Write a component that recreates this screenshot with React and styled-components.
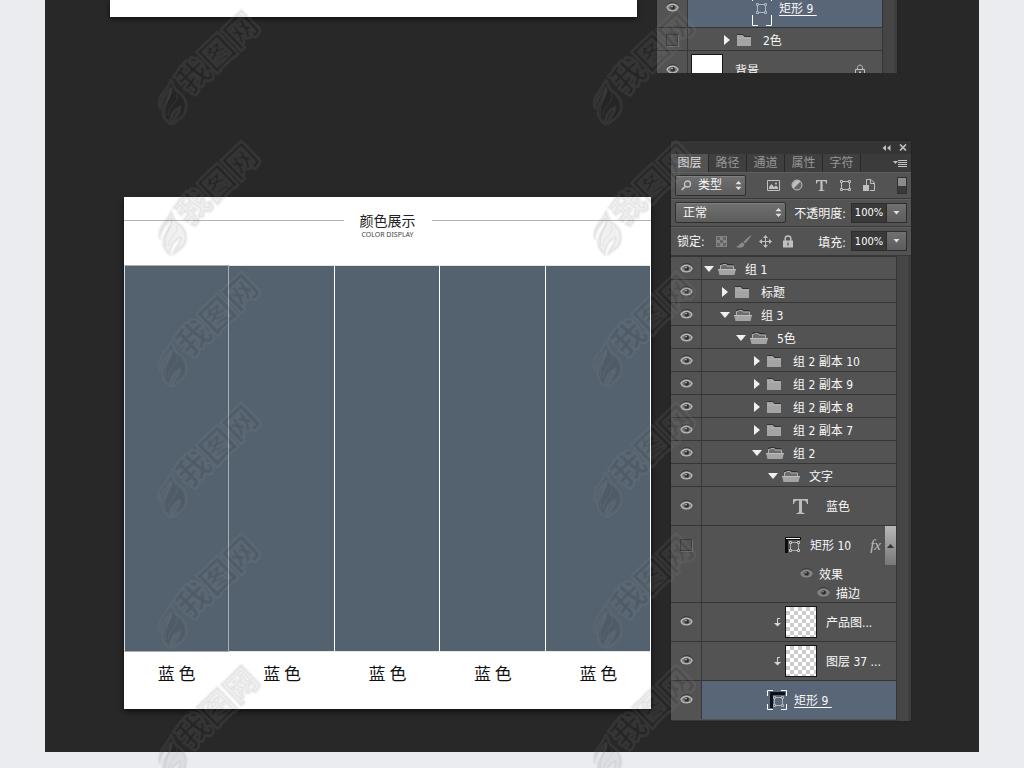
import { useState } from "react";
import styled, { createGlobalStyle, css } from "styled-components";

const GlobalStyle = createGlobalStyle`
  * {
    box-sizing: border-box;
  }

  body {
    margin: 0;
    background: #ebecf0;
    font-family: "DejaVu Sans Condensed", "Noto Sans CJK SC", sans-serif;
    font-size: 12px;
  }

  button, input, select {
    font: inherit;
    color: inherit;
    margin: 0;
    padding: 0;
    border: none;
    background: none;
  }

  svg {
    display: block;
    flex: none;
  }
`;

// Page

const Page = styled.main`
  position: relative;
  overflow: hidden;
  padding: 0 45px 16px;
`;

const Board = styled.div`
  background: #282828;
  padding-bottom: 31px;
`;

const TopSection = styled.section`
  display: grid;
  grid-template-columns: minmax(0, 1fr) 240px;
  gap: 20px;
  align-items: start;
  padding: 0 82px 0 65px;
  height: 73px;
  overflow: hidden;
`;

const ColorSection = styled.section`
  display: grid;
  grid-template-columns: minmax(0, 1fr) 240px;
  gap: 20px;
  align-items: start;
  margin-top: 68px;
  padding: 0 68px 0 79px;
`;

const Sheet = styled.div`
  background: #fff;
  height: 17px;
  box-shadow: 0 2px 5px rgba(0, 0, 0, 0.6);
`;

// Color card

const ColorCard = styled.article`
  margin-top: 56px;
  background: #fff;
  box-shadow: 0 3px 6px rgba(0, 0, 0, 0.6);
`;

const CardHeader = styled.header`
  display: flex;
  height: 68px;
  padding-top: 14px;
`;

const Rule = styled.span`
  flex: 1;
  height: 1px;
  margin-top: 9px;
  background: #b2b2b2;
`;

const CardTitle = styled.div`
  width: 88px;
  text-align: center;
  font-family: "Noto Sans CJK SC", sans-serif;
  color: #222;
`;

const Title = styled.h2`
  margin: 0;
  font-size: 14px;
  font-weight: 400;
  line-height: 18px;
`;

const Subtitle = styled.p`
  margin: 0;
  font-family: "Noto Sans", sans-serif;
  font-size: 7px;
  line-height: 11px;
  color: #444;
`;

const Swatches = styled.ul`
  display: grid;
  grid-template-columns: repeat(5, 1fr);
  margin: 0;
  padding: 0;
  list-style: none;
`;

const SwatchItem = styled.li`
  text-align: center;
  font-family: "Noto Sans CJK SC", sans-serif;
  font-size: 17px;
  line-height: 42px;
  color: #111;
  padding-bottom: 15px;
`;

const Swatch = styled.div`
  height: 387px;
  background: #54626f;
  border: 1px solid #e4e7ea;
  border-right-color: #fff;
  border-left-width: 0;

  ${(props) =>
    props.$outlined &&
    css`
      border: 1px solid #a9aeb4;
      border-left-color: #d8dadc;
    `}
`;

// Layers panel

const Panel = styled.aside`
  background: #535353;
  color: #f8f8f8;
  box-shadow: 0 0 2px #1c1c1c;
`;

const ClippedPanel = styled(Panel)`
  margin-top: -12px;
`;

const PanelBar = styled.div`
  display: flex;
  justify-content: flex-end;
  align-items: center;
  gap: 8px;
  height: 13px;
  padding-right: 4px;
  background: #343434;
  color: #c4c4c4;
`;

const Tabs = styled.div`
  display: flex;
  height: 18px;
  background: #3b3b3b;
`;

const Tab = styled.button`
  width: 38px;
  line-height: 17px;
  border-right: 1px solid #292929;
  color: ${(props) => (props.$active ? "#e6e6e6" : "#969696")};
  background: ${(props) => (props.$active ? "#535353" : "#3f3f3f")};
`;

const MenuButton = styled.button`
  margin-left: auto;
  padding-right: 4px;
  color: #c4c4c4;
`;

const IconButton = styled.button`
  display: flex;
  align-items: center;
  justify-content: center;
  color: ${(props) => (props.$dim ? "#8a8a8a" : "#c0c0c0")};
`;

const ControlRow = styled.div`
  display: flex;
  align-items: center;
  height: ${(props) => props.$height}px;
  padding: 0 4px;
  border-bottom: 1px solid #383838;
  box-shadow: inset 0 1px #5f5f5f;
`;

const LockLabel = styled.span`
  padding: 0 0 2px 2px;
`;

const SelectBox = styled.label`
  position: relative;
  width: ${(props) => props.$width}px;
  height: 21px;
  color: #f8f8f8;

  svg {
    position: absolute;
    top: 5px;
    right: 4px;
    pointer-events: none;
  }

  svg.search {
    left: 6px;
    right: auto;
    color: #c4c4c4;
  }
`;

const Select = styled.select`
  appearance: none;
  width: 100%;
  height: 100%;
  padding-left: ${(props) => props.$indent}px;
  border: 1px solid #2f2f2f;
  border-radius: 2px;
  background: linear-gradient(#707070, #5c5c5c);
  box-shadow: inset 0 1px #808080;

  option {
    background: #535353;
  }
`;

const IconGroup = styled.div`
  display: grid;
  grid-auto-flow: column;
  grid-auto-columns: ${(props) => props.$step}px;
  height: 20px;
  margin-left: ${(props) => props.$offset}px;
`;

const FilterSwitch = styled.button`
  width: 10px;
  height: 17px;
  margin-left: auto;
  border: 1px solid #303030;
  background: linear-gradient(#8c8c8c 50%, #3a3a3a 50%);
`;

const Field = styled.div`
  display: flex;
  align-items: center;
  gap: 5px;
  margin-left: auto;
`;

const PercentBox = styled.div`
  display: flex;
  height: 20px;
  border: 1px solid #2d2d2d;
`;

const PercentInput = styled.input`
  width: 34px;
  background: #393939;
  color: #fff;
  font-size: 11px;
  text-align: center;
`;

const PercentButton = styled(IconButton)`
  width: 20px;
  border-left: 1px solid #2d2d2d;
  background: linear-gradient(#707070, #5c5c5c);
`;

const ListFrame = styled.div`
  padding-right: 15px;
  background: linear-gradient(to left, #3e3e3e 3px, #474747 3px, #444 14px, #353535 14px, #353535 15px, transparent 15px);
`;

const Layers = styled.ul`
  margin: 0;
  padding: 0 0 1px;
  list-style: none;
  border-bottom: 1px solid #383838;
`;

const LayerRow = styled.li`
  position: relative;
  display: grid;
  grid-template-columns: 30px minmax(0, 1fr);
  height: ${(props) => props.$height}px;
  border-top: 1px solid #363636;
  line-height: 22px;
  white-space: nowrap;
`;

const EyeCell = styled.button`
  display: flex;
  align-items: center;
  justify-content: center;
  height: ${(props) => (props.$top ? props.$top + "px" : "100%")};
  padding-bottom: 1px;
  color: #b8b8b8;
`;

const EmptyEye = styled.span`
  width: 12px;
  height: 12px;
  border: 1px solid #3a3a3a;
  box-shadow: 1px 1px #707070;
`;

const LayerBody = styled.div`
  padding-left: ${(props) => props.$indent}px;
  border-left: 1px solid #383838;
  background: ${(props) => (props.$selected ? "#596678" : "transparent")};
`;

const LayerLine = styled.div`
  display: flex;
  align-items: center;
  height: ${(props) => props.$height || "100%"};
`;

const Toggle = styled(IconButton)`
  width: 10px;
  height: 16px;
  margin-right: 4px;
  color: #f0f0f0;
`;

const LayerName = styled.span`
  margin-left: ${(props) => props.$gap}px;
  padding-top: 2px;
  text-decoration: ${(props) => (props.$underlined ? "underline" : "none")};
  text-underline-offset: 2px;
  white-space: pre;
`;

const TypeMark = styled.span`
  color: #bcbcbc;
`;

const ClipMark = styled.span`
  width: 11px;
  color: #d4d4d4;
`;

const Thumb = styled.span`
  width: 32px;
  height: 32px;
  border: 1px solid #151515;
  background: ${(props) =>
    props.$blank ? "#fff" : "repeating-conic-gradient(#ccc 0 25%, #fff 0 50%) 0 0 / 8px 8px"};
`;

const Fx = styled.span`
  margin-left: auto;
  padding-right: 15px;
  color: #c0c0c0;
  font-family: "Liberation Serif", serif;
  font-size: 15px;
  font-style: italic;
`;

const EffectLine = styled.div`
  display: flex;
  align-items: center;
  height: 19px;
  padding-left: ${(props) => props.$indent}px;
  color: #8a8a8a;

  span {
    margin-left: 6px;
    padding-top: 2px;
    color: #f8f8f8;
  }
`;

const ScrollThumb = styled.span`
  position: absolute;
  top: 0;
  right: 0;
  display: flex;
  align-items: center;
  justify-content: center;
  width: 11px;
  height: 39px;
  background: linear-gradient(#b8b8b8, #777);
  color: #333;
`;

const LockMark = styled.span`
  margin-left: auto;
  padding-right: 17px;
  color: #c0c0c0;
`;

// Watermark

const Watermark = styled.div`
  position: absolute;
  inset: 8px 0 0 156px;
  display: grid;
  grid-template-columns: 435px 110px;
  grid-auto-rows: 131px;
  pointer-events: none;
  user-select: none;
`;

// Icons

const EyeIcon = () => (
  <svg width="13" height="11" viewBox="0 0 13 11" fill="none">
    <path d="M1 3.6C3.5 -.4 9.5 -.4 12 3.6" stroke="#363636" />
    <path d="M1 5.4C3 1.2 10 1.2 12 5.4C10 10 3 10 1 5.4Z" fill="#777" stroke="currentColor" strokeWidth="1.3" />
    <circle cx="6.7" cy="5.4" r="2.2" fill="#2d2d2d" />
    <circle cx="6" cy="4.6" r=".9" fill="currentColor" />
  </svg>
);

const ArrowIcon = ({ open }) => (
  <svg width="10" height="10" viewBox="0 0 10 10" fill="currentColor">
    <path d={open ? "M0 2H10L5 8Z" : "M2 0V10L8 5Z"} />
  </svg>
);

const FolderIcon = ({ open }) => (
  <svg width="18" height="13" viewBox="0 0 18 13">
    {open ? (
      <>
        <path d="M2.5 6V2.5H4L5 1.5H8L9 3H15.5V6" fill="#6c6c6c" stroke="#b0b0b0" />
        <path d="M2 1.5L4.5 .5H8.5L10 1.5H15.5" fill="none" stroke="#303030" />
        <path d="M0 6H18L16.5 12H1.5Z" fill="#a4a4a4" />
        <path d="M0 6.5H18" stroke="#bcbcbc" />
      </>
    ) : (
      <>
        <path d="M1 1H7L8.5 3H15V12H1Z" fill="#a4a4a4" />
        <path d="M1 .5H7L8.5 2.5H15" fill="none" stroke="#333" />
        <path d="M1 4H15" stroke="#b2b2b2" />
      </>
    )}
  </svg>
);

const ShapeIcon = () => (
  <svg width="13" height="13" viewBox="0 0 13 13" fill="none" stroke="currentColor">
    <path d="M4 2.5H9M4 10.5H9M2.5 4V9M10.5 4V9" />
    <path d="M1.5 1.5H3.5V3.5H1.5ZM9.5 1.5H11.5V3.5H9.5ZM1.5 9.5H3.5V11.5H1.5ZM9.5 9.5H11.5V11.5H9.5Z" />
  </svg>
);

const ShapeThumb = () => (
  <svg width="17" height="17" viewBox="0 0 17 17" fill="none">
    <path d="M0 0H16V3H3V16H0Z" fill="#120d0d" />
    <path d="M1 1.5H15" stroke="#f4f4f4" />
    <path d="M7 5.5H12M7 13.5H12M5.5 7V12M13.5 7V12" stroke="#aaa" />
    <path d="M4.5 4.5H6.5V6.5H4.5ZM12.5 4.5H14.5V6.5H12.5ZM4.5 12.5H6.5V14.5H4.5ZM12.5 12.5H14.5V14.5H12.5Z" stroke="#c4c4c4" />
  </svg>
);

const FramedShape = ({ tall }) => {
  const h = tall ? 36 : 20;
  return (
    <svg width="20" height={h} viewBox={`0 0 20 ${h}`} fill="none">
      {!tall && <path d="M3 2H18V5H6V18H3Z" fill="#0e1118" />}
      <g transform={tall ? "translate(2 11)" : "translate(4 4)"} stroke="#aeb6c1">
        <path d="M5 3.5H10M5 11.5H10M3.5 5V10M11.5 5V10" />
        <path d="M2.5 2.5H4.5V4.5H2.5ZM10.5 2.5H12.5V4.5H10.5ZM2.5 10.5H4.5V12.5H2.5ZM10.5 10.5H12.5V12.5H10.5Z" />
      </g>
      <path
        d={
          tall
            ? "M.5 11V.5H6M14 .5H19.5V11M.5 25V35.5H6M14 35.5H19.5V25"
            : "M.5 6V.5H6M14 .5H19.5V6M.5 14V19.5H6M14 19.5H19.5V14"
        }
        stroke="#fff"
      />
    </svg>
  );
};

const TypeIcon = ({ size = 11 }) => (
  <svg width={size} height={size} viewBox="0 0 15 15" fill="currentColor">
    <path d="M0 0H15V5H14C13.5 2.5 12.5 1.5 9 1.5V12.5C9 13.5 10 14 11.5 14V15H3.5V14C5 14 6 13.5 6 12.5V1.5C2.5 1.5 1.5 2.5 1 5H0Z" />
  </svg>
);

const ImageIcon = () => (
  <svg width="13" height="11" viewBox="0 0 13 11" fill="none">
    <path d="M.5 .5H12.5V10.5H.5Z" stroke="currentColor" />
    <path d="M2 9V7L4.5 4L7 7L9 5.5L11 7.5V9Z" fill="currentColor" />
    <circle cx="9" cy="3.5" r="1" fill="currentColor" />
  </svg>
);

const AdjustIcon = () => (
  <svg width="12" height="12" viewBox="0 0 12 12">
    <circle cx="6" cy="6" r="5" fill="#666" stroke="currentColor" />
    <path d="M2.5 9.5A5 5 0 0 1 9.5 2.5Z" fill="currentColor" />
  </svg>
);

const SmartIcon = () => (
  <svg width="12" height="12" viewBox="0 0 12 12" fill="none">
    <path d="M3.5 6V.5H8L11.5 4V11.5H7" stroke="currentColor" />
    <path d="M7.5 .5V4.5H11.5" stroke="currentColor" />
    <path d="M0 6H6V12H0Z" fill="currentColor" />
  </svg>
);

const SearchIcon = () => (
  <svg className="search" width="11" height="11" viewBox="0 0 11 11" fill="none" stroke="currentColor">
    <circle cx="6.5" cy="4" r="3" strokeWidth="1.3" />
    <path d="M4 6.5L.8 10" strokeWidth="1.8" />
  </svg>
);

const UpDownIcon = () => (
  <svg width="7" height="11" viewBox="0 0 7 11" fill="#e2e2e2">
    <path d="M.5 4.2H6.5L3.5 1ZM.5 6.8H6.5L3.5 10Z" />
  </svg>
);

const DownIcon = () => (
  <svg width="7" height="4" viewBox="0 0 7 4" fill="#e2e2e2">
    <path d="M.5 0H6.5L3.5 3.5Z" />
  </svg>
);

const UpIcon = () => (
  <svg width="7" height="4" viewBox="0 0 7 4" fill="currentColor">
    <path d="M0 4H7L3.5 0Z" />
  </svg>
);

const PixelsIcon = () => (
  <svg width="11" height="11" viewBox="0 0 11 11">
    <path d="M0 0H11V11H0Z" fill="#858585" />
    <path d="M1 1H4V4H1ZM7 1H10V4H7ZM4 4H7V7H4ZM1 7H4V10H1ZM7 7H10V10H7Z" fill="#646464" />
  </svg>
);

const BrushIcon = () => (
  <svg width="16" height="13" viewBox="0 0 16 13" fill="currentColor">
    <path d="M15.5 0C13 1.3 9.5 4.5 7.5 6.8L9.2 8.4C11.5 6 14.5 2.5 15.5 0ZM6.8 7.4C4 7.3 4 10.5 0 11.7C3 13.4 8.5 13 8.5 9Z" />
  </svg>
);

const MoveIcon = () => (
  <svg width="13" height="13" viewBox="0 0 13 13">
    <path d="M6.5 1V12M1 6.5H12" stroke="currentColor" fill="none" />
    <path d="M6.5 0L9 3H4ZM6.5 13L9 10H4ZM0 6.5L3 4V9ZM13 6.5L10 4V9Z" fill="currentColor" />
  </svg>
);

const LockIcon = () => (
  <svg width="10" height="13" viewBox="0 0 10 13">
    <path d="M2.2 6V3.5C2.2 0 7.8 0 7.8 3.5V6" fill="none" stroke="currentColor" strokeWidth="1.5" />
    <path d="M0 5.5H10V12.5H0Z" fill="currentColor" />
    <path d="M4.5 7.5H5.5V10.5H4.5Z" fill="#333" />
  </svg>
);

const LayerLockIcon = () => (
  <svg width="10" height="13" viewBox="0 0 10 13" fill="none" stroke="currentColor">
    <path d="M2.5 5.5V3.5C2.5 .2 7.5 .2 7.5 3.5V5.5" />
    <path d="M.5 5.5H9.5V12H.5Z" />
    <path d="M5 7.5V10" strokeWidth="2" />
  </svg>
);

const CollapseIcon = () => (
  <svg width="9" height="6" viewBox="0 0 9 6" fill="currentColor">
    <path d="M4 0V6L.5 3ZM8.5 0V6L5 3Z" />
  </svg>
);

const CloseIcon = () => (
  <svg width="8" height="7" viewBox="0 0 8 7" stroke="currentColor" strokeWidth="1.7">
    <path d="M1 .5L7 6.5M7 .5L1 6.5" />
  </svg>
);

const MenuIcon = () => (
  <svg width="14" height="9" viewBox="0 0 14 9">
    <path d="M0 2H5L2.5 5Z" fill="currentColor" />
    <path d="M5 1.5H14M5 3.5H14M5 5.5H14M5 7.5H14" stroke="currentColor" />
  </svg>
);

const ClipIcon = () => (
  <svg width="7" height="9" viewBox="0 0 7 9">
    <path d="M6 .5H3.5V6" stroke="currentColor" fill="none" />
    <path d="M0 5H7L3.5 8.5Z" fill="currentColor" />
  </svg>
);

const Mark = () => (
  <svg width="110" height="120" viewBox="0 0 110 120">
    <g stroke="rgba(150,150,150,.12)" strokeWidth="3" fill="rgba(0,0,0,.06)" strokeLinejoin="round">
      <path d="M15 72C18 78 18 82 22 84C28 88 31 94 30 101C29 109 22 111 17 116C18 108 25 105 24 99C18 102 14 108 14 116C9 112 5 106 8 98C10 91 16 87 15 80C10 86 4 92 4 100C0 88 12 82 15 72Z" />
      <text
        transform="translate(34 88) rotate(-44)"
        fontFamily="Noto Sans CJK SC, sans-serif"
        fontWeight="900"
        fontSize="33"
      >
        我图网
      </text>
    </g>
    <g fill="none" stroke="rgba(150,150,150,.14)">
      <path d="M15 80C17 88 7 94 10 108M20 86C25 93 12 97 12 108" />
    </g>
  </svg>
);

// Layer list

const layers = [
  { name: "组 1", depth: 0, open: true },
  { name: "标题", depth: 1 },
  { name: "组 3", depth: 1, open: true },
  { name: "5色", depth: 2, open: true },
  { name: "组 2 副本 10", depth: 3 },
  { name: "组 2 副本 9", depth: 3 },
  { name: "组 2 副本 8", depth: 3 },
  { name: "组 2 副本 7", depth: 3 },
  { name: "组 2", depth: 3, open: true },
  { name: "文字", depth: 4, open: true },
];

function Eye({ name, hidden, top }) {
  const [visible, setVisible] = useState(!hidden);

  return (
    <EyeCell
      type="button"
      $top={top}
      aria-label={name}
      aria-pressed={visible}
      onClick={() => setVisible(!visible)}
    >
      {visible ? <EyeIcon /> : <EmptyEye />}
    </EyeCell>
  );
}

function Group({ name, depth, open, hidden }) {
  return (
    <LayerRow $height={23}>
      <Eye name={name} hidden={hidden} />
      <LayerBody $indent={2 + depth * 16}>
        <LayerLine>
          <Toggle type="button" aria-label={name} aria-expanded={!!open}>
            <ArrowIcon open={open} />
          </Toggle>
          <FolderIcon open={open} />
          <LayerName $gap={9}>{name}</LayerName>
        </LayerLine>
      </LayerBody>
    </LayerRow>
  );
}

function Layer({ name, indent, gap = 9, selected, children, after }) {
  return (
    <LayerRow $height={39}>
      <Eye name={name} />
      <LayerBody $indent={indent} $selected={selected}>
        <LayerLine>
          {children}
          <LayerName $gap={gap} $underlined={selected}>{selected ? name + " " : name}</LayerName>
          {after}
        </LayerLine>
      </LayerBody>
    </LayerRow>
  );
}

function Percent({ id, label }) {
  const [value, setValue] = useState("100%");

  return (
    <Field>
      <label htmlFor={id}>{label}</label>
      <PercentBox>
        <PercentInput id={id} value={value} onChange={(e) => setValue(e.target.value)} />
        <PercentButton type="button" aria-label={label}>
          <DownIcon />
        </PercentButton>
      </PercentBox>
    </Field>
  );
}

function LayersPanel() {
  const [tab, setTab] = useState("图层");

  return (
    <Panel>
      <PanelBar>
        <IconButton type="button" aria-label="折叠"><CollapseIcon /></IconButton>
        <IconButton type="button" aria-label="关闭"><CloseIcon /></IconButton>
      </PanelBar>
      <Tabs>
        {["图层", "路径", "通道", "属性", "字符"].map((name) => (
          <Tab key={name} type="button" $active={tab === name} onClick={() => setTab(name)}>
            {name}
          </Tab>
        ))}
        <MenuButton type="button" aria-label="菜单"><MenuIcon /></MenuButton>
      </Tabs>

      <ControlRow $height={27}>
        <SelectBox $width={71}>
          <SearchIcon />
          <Select $indent={22} aria-label="类型"><option>类型</option></Select>
          <UpDownIcon />
        </SelectBox>
        <IconGroup $step={24} $offset={15}>
          <IconButton type="button" aria-label="像素"><ImageIcon /></IconButton>
          <IconButton type="button" aria-label="调整"><AdjustIcon /></IconButton>
          <IconButton type="button" aria-label="文字"><TypeIcon /></IconButton>
          <IconButton type="button" aria-label="形状"><ShapeIcon /></IconButton>
          <IconButton type="button" aria-label="智能对象"><SmartIcon /></IconButton>
        </IconGroup>
        <FilterSwitch type="button" aria-label="过滤" />
      </ControlRow>

      <ControlRow $height={28}>
        <SelectBox $width={111}>
          <Select $indent={7} aria-label="混合模式"><option>正常</option></Select>
          <UpDownIcon />
        </SelectBox>
        <Percent id="opacity" label="不透明度:" />
      </ControlRow>

      <ControlRow $height={29}>
        <LockLabel>锁定:</LockLabel>
        <IconGroup $step={22} $offset={6}>
          <IconButton type="button" $dim aria-label="锁定透明像素"><PixelsIcon /></IconButton>
          <IconButton type="button" $dim aria-label="锁定图像像素"><BrushIcon /></IconButton>
          <IconButton type="button" aria-label="锁定位置"><MoveIcon /></IconButton>
          <IconButton type="button" aria-label="锁定全部"><LockIcon /></IconButton>
        </IconGroup>
        <Percent id="fill" label="填充:" />
      </ControlRow>

      <ListFrame>
        <Layers>
          {layers.map((layer) => (
            <Group key={layer.name} {...layer} />
          ))}
          <Layer name="蓝色" indent={91} gap={18}>
            <TypeMark><TypeIcon size={15} /></TypeMark>
          </Layer>
          <LayerRow $height={77}>
            <Eye name="矩形 10" hidden top={38} />
            <LayerBody $indent={83}>
              <LayerLine $height="38px">
                <ShapeThumb />
                <LayerName $gap={8}>矩形 10</LayerName>
                <Fx>fx</Fx>
              </LayerLine>
              <EffectLine $indent={15}><EyeIcon /><span>效果</span></EffectLine>
              <EffectLine $indent={32}><EyeIcon /><span>描边</span></EffectLine>
            </LayerBody>
            <ScrollThumb><UpIcon /></ScrollThumb>
          </LayerRow>
          <Layer name="产品图..." indent={72}>
            <ClipMark><ClipIcon /></ClipMark>
            <Thumb />
          </Layer>
          <Layer name="图层 37 ..." indent={72}>
            <ClipMark><ClipIcon /></ClipMark>
            <Thumb />
          </Layer>
          <Layer name="矩形 9" indent={65} gap={7} selected>
            <FramedShape />
          </Layer>
        </Layers>
      </ListFrame>
    </Panel>
  );
}

function App() {
  return (
    <Page>
      <GlobalStyle />
      <Board>
        <TopSection>
          <Sheet />
          <ClippedPanel>
            <ListFrame>
              <Layers>
                <Layer name="矩形 9" indent={64} gap={7} selected>
                  <FramedShape tall />
                </Layer>
                <Group name="2色" depth={2} hidden />
                <Layer name="背景" indent={3} gap={12} after={<LockMark><LayerLockIcon /></LockMark>}>
                  <Thumb $blank />
                </Layer>
              </Layers>
            </ListFrame>
          </ClippedPanel>
        </TopSection>

        <ColorSection>
          <ColorCard>
            <CardHeader>
              <Rule />
              <CardTitle>
                <Title>颜色展示</Title>
                <Subtitle>COLOR DISPLAY</Subtitle>
              </CardTitle>
              <Rule />
            </CardHeader>
            <Swatches>
              {[0, 1, 2, 3, 4].map((i) => (
                <SwatchItem key={i}>
                  <Swatch $outlined={i === 0} />
                  蓝 色
                </SwatchItem>
              ))}
            </Swatches>
          </ColorCard>
          <LayersPanel />
        </ColorSection>
      </Board>

      <Watermark aria-hidden="true">
        {Array.from({ length: 12 }, (_, i) => (
          <Mark key={i} />
        ))}
      </Watermark>
    </Page>
  );
}

export default App;
